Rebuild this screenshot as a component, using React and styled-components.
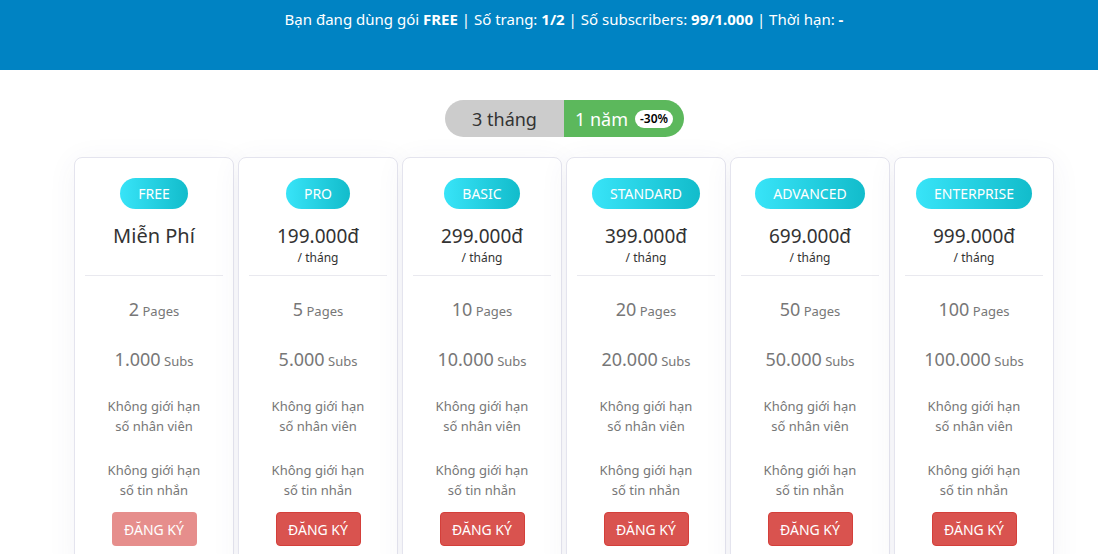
import React from "react"
import styled, { createGlobalStyle } from "styled-components"

const GlobalStyle = createGlobalStyle`
  body {
    margin: 0;
    background: #fff;
    font-family: "Noto Sans", "Open Sans", sans-serif;
    color: #333;
  }
`

const TopBar = styled.div`
  height: 70px;
  background-color: #0083c3;
  color: #fff;
  font-size: 15px;
  text-align: center;
  padding-top: 9px;
  padding-left: 30px;
  box-sizing: border-box;

  b {
    font-weight: 700;
  }
`

const Main = styled.div`
  padding-top: 30px;
  padding-left: 74px;
  width: 979px;
`

const ToggleRow = styled.div`
  display: flex;
  justify-content: center;
  margin-bottom: 20px;
  padding-left: 2px;
`

const Toggle = styled.div`
  display: flex;
  border-radius: 19px;
  overflow: hidden;
  height: 37px;
`

const ToggleOption = styled.div`
  width: ${p => p.wide}px;
  display: flex;
  align-items: center;
  justify-content: center;
  gap: 7px;
  font-size: 18px;
  background-color: ${p => (p.active ? "#5cb85c" : "#cccccc")};
  color: ${p => (p.active ? "#fff" : "#333")};
`

const Discount = styled.span`
  background: #fff;
  color: #000;
  font-size: 12px;
  font-weight: 600;
  border-radius: 10px;
  padding: 1px 5px;
  line-height: 16px;
`

const CardGrid = styled.div`
  display: grid;
  grid-template-columns: repeat(6, 160px);
  column-gap: 4px;
`

const Card = styled.div`
  border: 1px solid #e4e4ee;
  border-radius: 8px;
  box-shadow: 0 4px 30px rgba(60, 60, 120, 0.06);
  background: #fff;
  padding: 20px 10px 0;
  text-align: center;
  height: 420px;
  box-sizing: border-box;
`

const Badge = styled.div`
  display: inline-block;
  height: 31px;
  line-height: 31px;
  padding: 0 18px;
  border-radius: 16px;
  background: linear-gradient(90deg, #38e4f8, #12bccb);
  color: #fff;
  font-size: 14px;
  text-transform: uppercase;
`

const PriceBlock = styled.div`
  height: 67px;
  border-bottom: 1px solid #e9e9ef;
  padding-top: 14px;
  box-sizing: border-box;
`

const Price = styled.div`
  font-size: ${p => (p.free ? "20px" : "19px")};
  line-height: 26px;
  color: #333;
`

const Period = styled.div`
  font-size: 12px;
  line-height: 17px;
  color: #333;
`

const Feature = styled.div`
  color: #777;
  font-size: 13px;
  margin-top: ${p => p.top}px;
  line-height: 20px;

  strong {
    font-weight: 400;
    font-size: 18px;
  }
`

const SignUp = styled.button`
  margin-top: 12px;
  height: 34px;
  width: 85px;
  border: 1px solid #d43f3a;
  border-radius: 4px;
  background-color: #d9534f;
  color: #fff;
  font-family: inherit;
  font-size: 14px;
  opacity: ${p => (p.disabled ? 0.65 : 1)};
  border-color: ${p => (p.disabled ? "transparent" : "#d43f3a")};
`

const plans = [
  { name: "Free", price: "Miễn Phí", pages: 2, subs: "1.000" },
  { name: "Pro", price: "199.000đ", pages: 5, subs: "5.000" },
  { name: "Basic", price: "299.000đ", pages: 10, subs: "10.000" },
  { name: "Standard", price: "399.000đ", pages: 20, subs: "20.000" },
  { name: "Advanced", price: "699.000đ", pages: 50, subs: "50.000" },
  { name: "Enterprise", price: "999.000đ", pages: 100, subs: "100.000" },
]

const App = () => {
  return (
    <>
      <GlobalStyle />
      <TopBar>
        Bạn đang dùng gói <b>FREE</b> | Số trang: <b>1/2</b> | Số subscribers: <b>99/1.000</b> | Thời hạn: <b>-</b>
      </TopBar>
      <Main>
        <ToggleRow>
          <Toggle>
            <ToggleOption wide={119}>3 tháng</ToggleOption>
            <ToggleOption wide={120} active>
              1 năm <Discount>-30%</Discount>
            </ToggleOption>
          </Toggle>
        </ToggleRow>
        <CardGrid>
          {plans.map((plan, i) => (
            <Card key={plan.name}>
              <Badge>{plan.name}</Badge>
              <PriceBlock>
                <Price free={i === 0}>{plan.price}</Price>
                {i > 0 && <Period>/ tháng</Period>}
              </PriceBlock>
              <Feature top={23}>
                <strong>{plan.pages}</strong> Pages
              </Feature>
              <Feature top={28}>
                <strong>{plan.subs}</strong> Subs
              </Feature>
              <Feature top={25}>
                Không giới hạn<br />số nhân viên
              </Feature>
              <Feature top={24}>
                Không giới hạn<br />số tin nhắn
              </Feature>
              <SignUp disabled={i === 0}>ĐĂNG KÝ</SignUp>
            </Card>
          ))}
        </CardGrid>
      </Main>
    </>
  )
}

export default App
